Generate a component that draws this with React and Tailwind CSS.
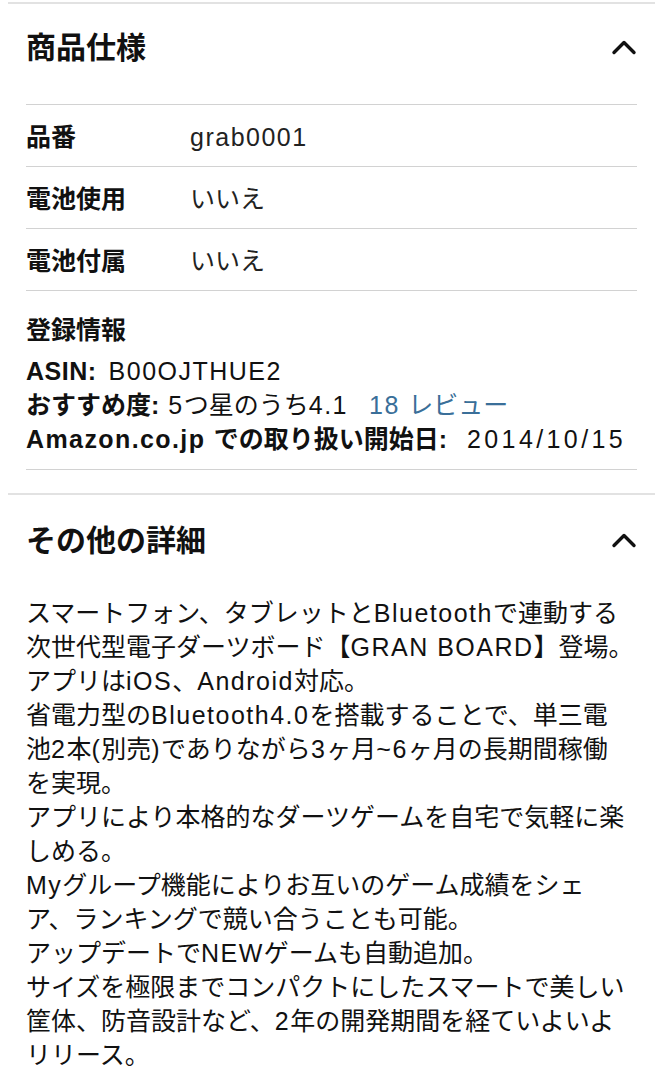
import React from 'react';

const specs = [
  { label: '品番', value: 'grab0001' },
  { label: '電池使用', value: 'いいえ' },
  { label: '電池付属', value: 'いいえ' },
];

// description, one entry per displayed line
const detailLines = [
  'スマートフォン、タブレットとBluetoothで連動する',
  '次世代型電子ダーツボード【GRAN BOARD】登場。',
  'アプリはiOS、Android対応。',
  '省電力型のBluetooth4.0を搭載することで、単三電',
  '池2本(別売)でありながら3ヶ月~6ヶ月の長期間稼働',
  'を実現。',
  'アプリにより本格的なダーツゲームを自宅で気軽に楽',
  'しめる。',
  'Myグループ機能によりお互いのゲーム成績をシェ',
  'ア、ランキングで競い合うことも可能。',
  'アップデートでNEWゲームも自動追加。',
  'サイズを極限までコンパクトにしたスマートで美しい',
  '筐体、防音設計など、2年の開発期間を経ていよいよ',
  'リリース。',
];

// latin runs get a little extra tracking so they sit wider next to kana
function Txt({ children }) {
  const parts = String(children).split(/([A-Za-z0-9.~()/:\- ]+)/);
  return parts.map((p, i) =>
    /^[A-Za-z0-9.~()/:\- ]+$/.test(p) ? (
      <span key={i} className="tracking-[1.5px]">
        {p}
      </span>
    ) : (
      <React.Fragment key={i}>{p}</React.Fragment>
    )
  );
}

function ChevronUp() {
  return (
    <svg width="26" height="16" viewBox="0 0 26 16" fill="none" className="shrink-0">
      <path d="M3 13.5 L13 3.5 L23 13.5" stroke="#111" strokeWidth="3.4" strokeLinecap="round" strokeLinejoin="round" />
    </svg>
  );
}

function SectionHeader({ title, bordered, top = 'pt-[24px]' }) {
  return (
    <div
      className={`flex items-center justify-between ${top} pb-[36px] ${
        bordered ? 'border-b border-[#d2d2d2]' : ''
      }`}
    >
      <h2 className="text-[30px] leading-[40px] font-bold">{title}</h2>
      <div className="-mt-[2px]">
        <ChevronUp />
      </div>
    </div>
  );
}

export default function App() {
  return (
    <div
      className="bg-white min-h-screen text-[#111] px-2 pt-[2px]"
      style={{ fontFamily: '"Liberation Sans", "Noto Sans CJK JP", sans-serif' }}
    >
      {/* Product specs */}
      <section className="border-t-2 border-[#e2e2e2] px-[18px]">
        <SectionHeader title="商品仕様" bordered />

        {specs.map((s) => (
          <div key={s.label} className="flex items-center h-[62px] pt-[4px] border-b border-[#d2d2d2]">
            <div className="w-[164px] text-[25px] font-bold leading-none">{s.label}</div>
            <div className="text-[25px] leading-none text-[#222]">
              <Txt>{s.value}</Txt>
            </div>
          </div>
        ))}

        <div className="pt-[22px] pb-[13px] border-b border-[#d2d2d2]">
          <div className="text-[25px] leading-[34px] font-bold mb-[7px]">登録情報</div>
          <div className="text-[25px] leading-[34px]">
            <span className="font-bold tracking-[0.5px]">ASIN:</span>
            <span className="ml-[12px]">
              <Txt>B00OJTHUE2</Txt>
            </span>
          </div>
          <div className="text-[25px] leading-[34px]">
            <span className="font-bold">おすすめ度:</span>
            <span className="ml-[9px]">
              <Txt>5つ星のうち4.1</Txt>
            </span>
            <span className="ml-[21px] text-[#3a6f99]">
              <Txt>18 レビュー</Txt>
            </span>
          </div>
          <div className="text-[25px] leading-[34px] whitespace-nowrap">
            <span className="font-bold">
              <span className="tracking-[1.4px]">Amazon.co.jp </span>での取り扱い開始日:
            </span>
            <span className="ml-[20px] tracking-[3.4px]">2014/10/15</span>
          </div>
        </div>
      </section>

      {/* Other details */}
      <section className="mt-[23px] border-t-2 border-[#e2e2e2] px-[18px]">
        <SectionHeader title="その他の詳細" top="pt-[26px]" />
        <div className="-mt-[1px] text-[25px] leading-[34px]">
          {detailLines.map((line, i) => (
            <p key={i} className="whitespace-nowrap">
              <Txt>{line}</Txt>
            </p>
          ))}
        </div>
      </section>
    </div>
  );
}
